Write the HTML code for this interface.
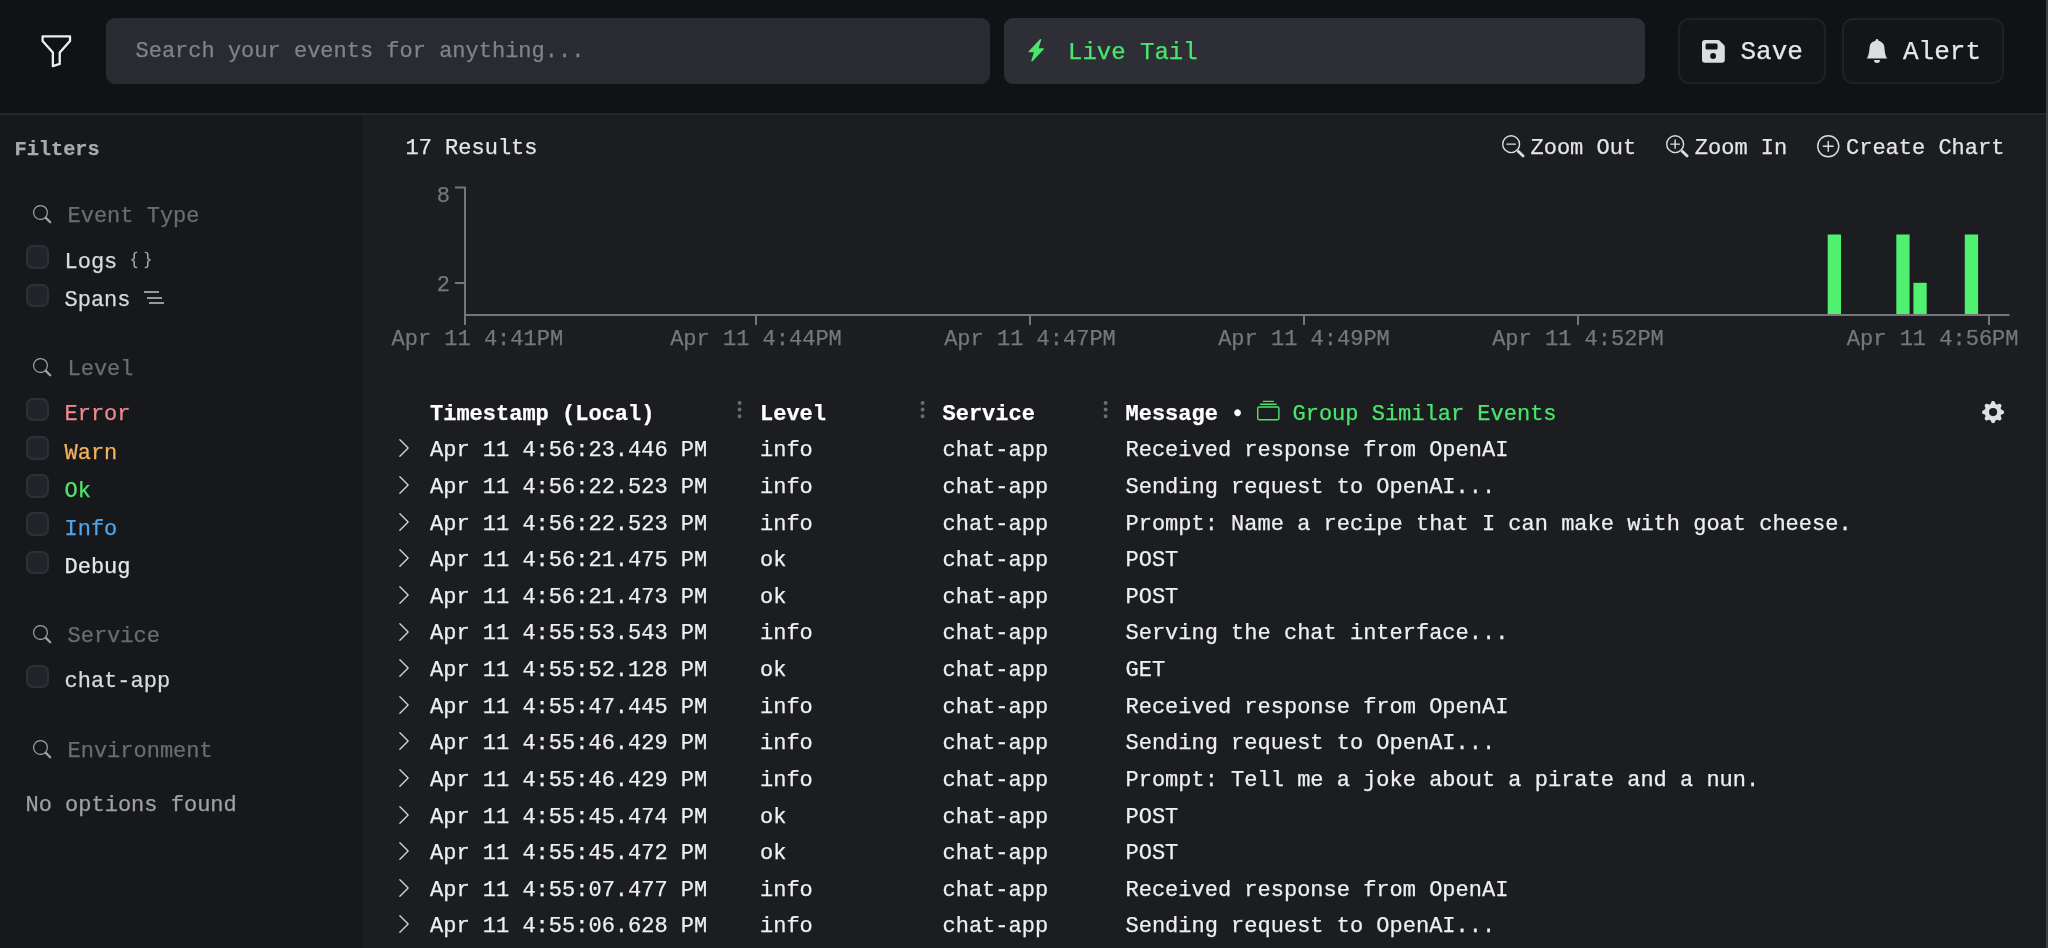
<!DOCTYPE html>
<html lang="en"><head><meta charset="utf-8"><title>Search</title>
<style>
html,body{margin:0;padding:0;background:#1c1d21;}
body{width:2048px;height:948px;position:relative;overflow:hidden;font-family:"Liberation Mono",monospace;}
.t{position:absolute;white-space:pre;-webkit-text-stroke:0.25px currentColor;font-family:"Liberation Mono",monospace;}
.i{position:absolute;display:block;overflow:visible;}
.b{position:absolute;box-sizing:border-box;}
.cb{position:absolute;box-sizing:border-box;width:23.3px;height:23.4px;border-radius:7px;background:#232429;border:2px solid #2f3036;}
#w{position:absolute;left:0;top:0;width:2048px;height:948px;will-change:transform;}
</style></head><body><div id="w">

<div class="b" style="left:0;top:0;width:2048px;height:113px;background:#111216"></div>
<div class="b" style="left:0;top:111px;width:2048px;height:2px;background:#0f1014"></div>
<div class="b" style="left:0;top:113px;width:2048px;height:2px;background:#25262a"></div>
<div class="b" style="left:0;top:115px;width:363px;height:833px;background:#17181c"></div>
<div class="b" style="left:2046px;top:0;width:2px;height:948px;background:#3e3f44"></div>
<svg class="i" style="left:38.40px;top:32.50px" width="36.6" height="36.6" viewBox="0 0 16 16" fill="#eeeff1"><path d="M1.5 1.5A.5.5 0 0 1 2 1h12a.5.5 0 0 1 .5.5v2a.5.5 0 0 1-.128.334L10 8.692V13.5a.5.5 0 0 1-.342.474l-3 1A.5.5 0 0 1 6 14.5V8.692L1.628 3.834A.5.5 0 0 1 1.5 3.5zm1 .5v1.308l4.372 4.858A.5.5 0 0 1 7 8.5v5.306l2-.666V8.5a.5.5 0 0 1 .128-.334L13.5 3.308V2z"/></svg>
<div class="b" style="left:106px;top:18px;width:883.5px;height:66px;border-radius:9px;background:#2a2b30"></div>
<div class="t " style="left:135.5px;top:41.05px;font-size:22px;line-height:22px;color:#7f838a;">Search your events for anything...</div>
<div class="b" style="left:1004px;top:18px;width:640.5px;height:66px;border-radius:9px;background:#2e2f36"></div>
<svg class="i" style="left:1025.00px;top:39.00px" width="22.5" height="22.5" viewBox="0 0 16 16" fill="#4be56d"><path d="M11.251.068a.5.5 0 0 1 .227.58L9.677 6.5H13a.5.5 0 0 1 .364.843l-8 8.5a.5.5 0 0 1-.842-.49L6.323 9.5H3a.5.5 0 0 1-.364-.843l8-8.5a.5.5 0 0 1 .615-.09z"/></svg>
<div class="t " style="left:1068.0px;top:41.31px;font-size:24px;line-height:24px;color:#4be56d;">Live Tail</div>
<div class="b" style="left:1678px;top:18px;width:148px;height:66px;border-radius:11px;background:#141518;border:2px solid #202126"></div>
<svg class="i" style="left:1702.40px;top:39.70px" width="22.8" height="22.8" viewBox="0 0 23 23" fill="#dcdde0"><path fill-rule="evenodd" d="M3 0H16.2a2 2 0 0 1 1.4.6L22.4 5.4a2 2 0 0 1 .6 1.4V20a3 3 0 0 1-3 3H3a3 3 0 0 1-3-3V3a3 3 0 0 1 3-3ZM5 3.6H14.3a1.4 1.4 0 0 1 1.4 1.4V8.3a1.4 1.4 0 0 1-1.4 1.4H5A1.4 1.4 0 0 1 3.600 8.3V5A1.4 1.4 0 0 1 5 3.6ZM11.200 13.2a3 3 0 1 0 0 6a3 3 0 1 0 0-6Z"/></svg>
<div class="t " style="left:1740.5px;top:39.48px;font-size:26px;line-height:26px;color:#e6e7ea;">Save</div>
<div class="b" style="left:1841.5px;top:18px;width:162px;height:66px;border-radius:11px;background:#141518;border:2px solid #202126"></div>
<svg class="i" style="left:1865.00px;top:39.00px" width="24" height="24" viewBox="0 0 16 16" fill="#dcdde0"><path d="M8 16a2 2 0 0 0 2-2H6a2 2 0 0 0 2 2m.995-14.901a1 1 0 1 0-1.99 0A5 5 0 0 0 3 6c0 1.098-.5 6-2 7h14c-1.5-1-2-5.902-2-7 0-2.42-1.72-4.44-4.005-4.901"/></svg>
<div class="t " style="left:1903.0px;top:39.48px;font-size:26px;line-height:26px;color:#e6e7ea;">Alert</div>
<div class="t " style="left:14.5px;top:140.25px;font-size:20.3px;line-height:20.3px;color:#a9aaaf;font-weight:700;">Filters</div>
<svg class="i" style="left:32.80px;top:204.90px" width="18.4" height="18.4" viewBox="0 0 16 16" fill="#a0a1a6"><path d="M11.742 10.344a6.5 6.5 0 1 0-1.397 1.398h-.001q.044.06.098.115l3.85 3.85a1 1 0 0 0 1.415-1.414l-3.85-3.85a1 1 0 0 0-.115-.1zM12 6.5a5.5 5.5 0 1 1-11 0 5.5 5.5 0 0 1 11 0"/></svg>
<div class="t " style="left:67.5px;top:206.05px;font-size:22px;line-height:22px;color:#6b6c71;">Event Type</div>
<div class="cb" style="left:25.9px;top:245.2px"></div>
<div class="t " style="left:64.5px;top:251.55px;font-size:22px;line-height:22px;color:#d9dade;">Logs</div>
<svg class="i" style="left:129.60px;top:248.60px" width="22" height="22" viewBox="0 0 16 16" fill="#a3a4a9"><path d="M2.114 8.063V7.9c1.005-.102 1.497-.615 1.497-1.6V4.503c0-1.094.39-1.538 1.354-1.538h.273V2h-.376C3.25 2 2.49 2.759 2.49 4.352v1.524c0 1.094-.376 1.456-1.49 1.456v1.299c1.114 0 1.49.362 1.49 1.456v1.524c0 1.593.759 2.352 2.372 2.352h.376v-.964h-.273c-.964 0-1.354-.444-1.354-1.538V9.663c0-.984-.492-1.497-1.497-1.6M13.886 7.9v.163c-1.005.103-1.497.616-1.497 1.6v1.798c0 1.094-.39 1.538-1.354 1.538h-.273v.964h.376c1.613 0 2.372-.759 2.372-2.352v-1.524c0-1.094.376-1.456 1.49-1.456V7.332c-1.114 0-1.49-.362-1.49-1.456V4.352C13.51 2.759 12.75 2 11.138 2h-.376v.964h.273c.964 0 1.354.444 1.354 1.538V6.3c0 .984.492 1.497 1.497 1.6"/></svg>
<div class="cb" style="left:25.9px;top:283.5px"></div>
<div class="t " style="left:64.5px;top:289.85px;font-size:22px;line-height:22px;color:#d9dade;">Spans</div>
<div class="b" style="left:143.9px;top:291.1px;width:15.2px;height:1.9px;background:#96979c"></div>
<div class="b" style="left:146.6px;top:296.8px;width:15.2px;height:1.9px;background:#96979c"></div>
<div class="b" style="left:149.2px;top:302.2px;width:15.2px;height:1.9px;background:#96979c"></div>
<svg class="i" style="left:32.80px;top:357.90px" width="18.4" height="18.4" viewBox="0 0 16 16" fill="#a0a1a6"><path d="M11.742 10.344a6.5 6.5 0 1 0-1.397 1.398h-.001q.044.06.098.115l3.85 3.85a1 1 0 0 0 1.415-1.414l-3.85-3.85a1 1 0 0 0-.115-.1zM12 6.5a5.5 5.5 0 1 1-11 0 5.5 5.5 0 0 1 11 0"/></svg>
<div class="t " style="left:67.5px;top:359.05px;font-size:22px;line-height:22px;color:#6b6c71;">Level</div>
<div class="cb" style="left:25.9px;top:397.8px"></div>
<div class="t " style="left:64.5px;top:404.15px;font-size:22px;line-height:22px;color:#f08a8c;">Error</div>
<div class="cb" style="left:25.9px;top:436.3px"></div>
<div class="t " style="left:64.5px;top:442.65px;font-size:22px;line-height:22px;color:#f5b35c;">Warn</div>
<div class="cb" style="left:25.9px;top:474.3px"></div>
<div class="t " style="left:64.5px;top:480.65px;font-size:22px;line-height:22px;color:#4fe56c;">Ok</div>
<div class="cb" style="left:25.9px;top:512.3px"></div>
<div class="t " style="left:64.5px;top:518.65px;font-size:22px;line-height:22px;color:#4aa6ee;">Info</div>
<div class="cb" style="left:25.9px;top:550.7px"></div>
<div class="t " style="left:64.5px;top:557.05px;font-size:22px;line-height:22px;color:#e6e7ea;">Debug</div>
<svg class="i" style="left:32.80px;top:624.90px" width="18.4" height="18.4" viewBox="0 0 16 16" fill="#a0a1a6"><path d="M11.742 10.344a6.5 6.5 0 1 0-1.397 1.398h-.001q.044.06.098.115l3.85 3.85a1 1 0 0 0 1.415-1.414l-3.85-3.85a1 1 0 0 0-.115-.1zM12 6.5a5.5 5.5 0 1 1-11 0 5.5 5.5 0 0 1 11 0"/></svg>
<div class="t " style="left:67.5px;top:626.05px;font-size:22px;line-height:22px;color:#6b6c71;">Service</div>
<div class="cb" style="left:25.9px;top:665.1px"></div>
<div class="t " style="left:64.5px;top:671.45px;font-size:22px;line-height:22px;color:#d9dade;">chat-app</div>
<svg class="i" style="left:32.80px;top:740.30px" width="18.4" height="18.4" viewBox="0 0 16 16" fill="#a0a1a6"><path d="M11.742 10.344a6.5 6.5 0 1 0-1.397 1.398h-.001q.044.06.098.115l3.85 3.85a1 1 0 0 0 1.415-1.414l-3.85-3.85a1 1 0 0 0-.115-.1zM12 6.5a5.5 5.5 0 1 1-11 0 5.5 5.5 0 0 1 11 0"/></svg>
<div class="t " style="left:67.5px;top:741.45px;font-size:22px;line-height:22px;color:#6b6c71;">Environment</div>
<div class="t " style="left:25.5px;top:795.25px;font-size:22px;line-height:22px;color:#a0a1a6;">No options found</div>
<div class="t " style="left:405.5px;top:138.25px;font-size:22px;line-height:22px;color:#e4e5e9;">17 Results</div>
<svg class="i" style="left:1501.50px;top:135.00px" width="22.5" height="22.5" viewBox="0 0 16 16" fill="#dcdde0"><path fill-rule="evenodd" d="M6.5 12a5.5 5.5 0 1 0 0-11 5.5 5.5 0 0 0 0 11M13 6.5a6.5 6.5 0 1 1-13 0 6.5 6.5 0 0 1 13 0"/><path d="M10.344 11.742q.044.06.098.115l3.85 3.85a1 1 0 0 0 1.415-1.414l-3.85-3.85a1 1 0 0 0-.115-.1 6.5 6.5 0 0 1-1.398 1.4z"/><path fill-rule="evenodd" d="M3 6.5a.5.5 0 0 1 .5-.5h6a.5.5 0 0 1 0 1h-6a.5.5 0 0 1-.5-.5"/></svg>
<div class="t " style="left:1530.5px;top:138.25px;font-size:22px;line-height:22px;color:#e4e5e9;">Zoom Out</div>
<svg class="i" style="left:1665.50px;top:135.00px" width="22.5" height="22.5" viewBox="0 0 16 16" fill="#dcdde0"><path fill-rule="evenodd" d="M6.5 12a5.5 5.5 0 1 0 0-11 5.5 5.5 0 0 0 0 11M13 6.5a6.5 6.5 0 1 1-13 0 6.5 6.5 0 0 1 13 0"/><path d="M10.344 11.742q.044.06.098.115l3.85 3.85a1 1 0 0 0 1.415-1.414l-3.85-3.85a1 1 0 0 0-.115-.1 6.5 6.5 0 0 1-1.398 1.4z"/><path fill-rule="evenodd" d="M6.5 3a.5.5 0 0 1 .5.5V6h2.5a.5.5 0 0 1 0 1H7v2.5a.5.5 0 0 1-1 0V7H3.5a.5.5 0 0 1 0-1H6V3.5a.5.5 0 0 1 .5-.5"/></svg>
<div class="t " style="left:1694.8px;top:138.25px;font-size:22px;line-height:22px;color:#e4e5e9;">Zoom In</div>
<svg class="i" style="left:1816.60px;top:135.00px" width="22.5" height="22.5" viewBox="0 0 16 16" fill="#dcdde0"><path d="M8 15A7 7 0 1 1 8 1a7 7 0 0 1 0 14m0 1A8 8 0 1 0 8 0a8 8 0 0 0 0 16"/><path d="M8 4a.5.5 0 0 1 .5.5v3h3a.5.5 0 0 1 0 1h-3v3a.5.5 0 0 1-1 0v-3h-3a.5.5 0 0 1 0-1h3v-3A.5.5 0 0 1 8 4"/></svg>
<div class="t " style="left:1846.0px;top:138.25px;font-size:22px;line-height:22px;color:#e4e5e9;">Create Chart</div>
<svg class="i" style="left:0;top:0" width="2048" height="948" viewBox="0 0 2048 948"><path d="M455 187.5H465V325 M465 315H2009.5 M455 283H465 M756 315V325 M1030 315V325 M1304 315V325 M1578 315V325 M1989 315V325" fill="none" stroke="#75767b" stroke-width="2"/><rect x="1827.7" y="234.5" width="13.3" height="79.5" fill="#50f070"/><rect x="1896.3" y="234.5" width="13.3" height="79.5" fill="#50f070"/><rect x="1913.4" y="282.8" width="13.3" height="31.19999999999999" fill="#50f070"/><rect x="1964.8" y="234.5" width="13.3" height="79.5" fill="#50f070"/><text x="450" y="202.2" text-anchor="end" font-family='"Liberation Mono", monospace' font-size="22" fill="#76777c" stroke="#76777c" stroke-width="0.25">8</text><text x="450" y="291" text-anchor="end" font-family='"Liberation Mono", monospace' font-size="22" fill="#76777c" stroke="#76777c" stroke-width="0.25">2</text><text x="391.5" y="345" text-anchor="start" font-family='"Liberation Mono", monospace' font-size="22" fill="#76777c" stroke="#76777c" stroke-width="0.25">Apr 11 4:41PM</text><text x="756" y="345" text-anchor="middle" font-family='"Liberation Mono", monospace' font-size="22" fill="#76777c" stroke="#76777c" stroke-width="0.25">Apr 11 4:44PM</text><text x="1030" y="345" text-anchor="middle" font-family='"Liberation Mono", monospace' font-size="22" fill="#76777c" stroke="#76777c" stroke-width="0.25">Apr 11 4:47PM</text><text x="1304" y="345" text-anchor="middle" font-family='"Liberation Mono", monospace' font-size="22" fill="#76777c" stroke="#76777c" stroke-width="0.25">Apr 11 4:49PM</text><text x="1578" y="345" text-anchor="middle" font-family='"Liberation Mono", monospace' font-size="22" fill="#76777c" stroke="#76777c" stroke-width="0.25">Apr 11 4:52PM</text><text x="2018.5" y="345" text-anchor="end" font-family='"Liberation Mono", monospace' font-size="22" fill="#76777c" stroke="#76777c" stroke-width="0.25">Apr 11 4:56PM</text></svg>
<div class="t " style="left:430.0px;top:403.65px;font-size:22px;line-height:22px;color:#ffffff;font-weight:700;">Timestamp (Local)</div>
<div class="t " style="left:760.0px;top:403.65px;font-size:22px;line-height:22px;color:#ffffff;font-weight:700;">Level</div>
<div class="t " style="left:942.5px;top:403.65px;font-size:22px;line-height:22px;color:#ffffff;font-weight:700;">Service</div>
<div class="t " style="left:1125.5px;top:403.65px;font-size:22px;line-height:22px;color:#ffffff;font-weight:700;">Message</div>
<div class="t " style="left:1231.1px;top:403.65px;font-size:22px;line-height:22px;color:#ffffff;font-weight:700;">•</div>
<svg class="i" style="left:1256.80px;top:400.00px" width="22.6" height="22.6" viewBox="0 0 16 16" fill="#4be56d"><path d="M2.5 3.5a.5.5 0 0 1 0-1h11a.5.5 0 0 1 0 1zm2-2a.5.5 0 0 1 0-1h7a.5.5 0 0 1 0 1zM0 13a1.5 1.5 0 0 0 1.5 1.5h13A1.5 1.5 0 0 0 16 13V6a1.5 1.5 0 0 0-1.5-1.5h-13A1.5 1.5 0 0 0 0 6zm1.5.5A.5.5 0 0 1 1 13V6a.5.5 0 0 1 .5-.5h13a.5.5 0 0 1 .5.5v7a.5.5 0 0 1-.5.5z"/></svg>
<div class="t " style="left:1292.5px;top:403.65px;font-size:22px;line-height:22px;color:#4be56d;">Group Similar Events</div>
<svg class="i" style="left:728.90px;top:398.80px" width="21.2" height="21.2" viewBox="0 0 16 16" fill="#6b6c72"><path d="M9.5 13a1.5 1.5 0 1 1-3 0 1.5 1.5 0 0 1 3 0m0-5a1.5 1.5 0 1 1-3 0 1.5 1.5 0 0 1 3 0m0-5a1.5 1.5 0 1 1-3 0 1.5 1.5 0 0 1 3 0"/></svg>
<svg class="i" style="left:911.80px;top:398.80px" width="21.2" height="21.2" viewBox="0 0 16 16" fill="#6b6c72"><path d="M9.5 13a1.5 1.5 0 1 1-3 0 1.5 1.5 0 0 1 3 0m0-5a1.5 1.5 0 1 1-3 0 1.5 1.5 0 0 1 3 0m0-5a1.5 1.5 0 1 1-3 0 1.5 1.5 0 0 1 3 0"/></svg>
<svg class="i" style="left:1094.80px;top:398.80px" width="21.2" height="21.2" viewBox="0 0 16 16" fill="#6b6c72"><path d="M9.5 13a1.5 1.5 0 1 1-3 0 1.5 1.5 0 0 1 3 0m0-5a1.5 1.5 0 1 1-3 0 1.5 1.5 0 0 1 3 0m0-5a1.5 1.5 0 1 1-3 0 1.5 1.5 0 0 1 3 0"/></svg>
<svg class="i" style="left:1981.90px;top:400.80px" width="22.2" height="22.2" viewBox="0 0 16 16" fill="#dfe0e3"><path d="M9.405 1.05c-.413-1.4-2.397-1.4-2.81 0l-.1.34a1.464 1.464 0 0 1-2.105.872l-.31-.17c-1.283-.698-2.686.705-1.987 1.987l.169.311c.446.82.023 1.841-.872 2.105l-.34.1c-1.4.413-1.4 2.397 0 2.81l.34.1a1.464 1.464 0 0 1 .872 2.105l-.17.31c-.698 1.283.705 2.686 1.987 1.987l.311-.169a1.464 1.464 0 0 1 2.105.872l.1.34c.413 1.4 2.397 1.4 2.81 0l.1-.34a1.464 1.464 0 0 1 2.105-.872l.31.17c1.283.698 2.686-.705 1.987-1.987l-.169-.311a1.464 1.464 0 0 1 .872-2.105l.34-.1c1.4-.413 1.4-2.397 0-2.81l-.34-.1a1.464 1.464 0 0 1-.872-2.105l.17-.31c.698-1.283-.705-2.686-1.987-1.987l-.311.169a1.464 1.464 0 0 1-2.105-.872zM8 10.93a2.929 2.929 0 1 1 0-5.86 2.929 2.929 0 0 1 0 5.858z"/></svg>
<svg class="i" style="left:393.40px;top:437.40px" width="22" height="22" viewBox="0 0 16 16" fill="#d0d1d5"><path fill-rule="evenodd" d="M4.646 1.646a.5.5 0 0 1 .708 0l6 6a.5.5 0 0 1 0 .708l-6 6a.5.5 0 0 1-.708-.708L10.293 8 4.646 2.354a.5.5 0 0 1 0-.708"/></svg>
<div class="t " style="left:430.0px;top:440.35px;font-size:22px;line-height:22px;color:#eeeff2;">Apr 11 4:56:23.446 PM</div>
<div class="t " style="left:760.0px;top:440.35px;font-size:22px;line-height:22px;color:#eeeff2;">info</div>
<div class="t " style="left:942.5px;top:440.35px;font-size:22px;line-height:22px;color:#eeeff2;">chat-app</div>
<div class="t " style="left:1125.5px;top:440.35px;font-size:22px;line-height:22px;color:#eeeff2;">Received response from OpenAI</div>
<svg class="i" style="left:393.40px;top:474.02px" width="22" height="22" viewBox="0 0 16 16" fill="#d0d1d5"><path fill-rule="evenodd" d="M4.646 1.646a.5.5 0 0 1 .708 0l6 6a.5.5 0 0 1 0 .708l-6 6a.5.5 0 0 1-.708-.708L10.293 8 4.646 2.354a.5.5 0 0 1 0-.708"/></svg>
<div class="t " style="left:430.0px;top:476.97px;font-size:22px;line-height:22px;color:#eeeff2;">Apr 11 4:56:22.523 PM</div>
<div class="t " style="left:760.0px;top:476.97px;font-size:22px;line-height:22px;color:#eeeff2;">info</div>
<div class="t " style="left:942.5px;top:476.97px;font-size:22px;line-height:22px;color:#eeeff2;">chat-app</div>
<div class="t " style="left:1125.5px;top:476.97px;font-size:22px;line-height:22px;color:#eeeff2;">Sending request to OpenAI...</div>
<svg class="i" style="left:393.40px;top:510.64px" width="22" height="22" viewBox="0 0 16 16" fill="#d0d1d5"><path fill-rule="evenodd" d="M4.646 1.646a.5.5 0 0 1 .708 0l6 6a.5.5 0 0 1 0 .708l-6 6a.5.5 0 0 1-.708-.708L10.293 8 4.646 2.354a.5.5 0 0 1 0-.708"/></svg>
<div class="t " style="left:430.0px;top:513.59px;font-size:22px;line-height:22px;color:#eeeff2;">Apr 11 4:56:22.523 PM</div>
<div class="t " style="left:760.0px;top:513.59px;font-size:22px;line-height:22px;color:#eeeff2;">info</div>
<div class="t " style="left:942.5px;top:513.59px;font-size:22px;line-height:22px;color:#eeeff2;">chat-app</div>
<div class="t " style="left:1125.5px;top:513.59px;font-size:22px;line-height:22px;color:#eeeff2;">Prompt: Name a recipe that I can make with goat cheese.</div>
<svg class="i" style="left:393.40px;top:547.26px" width="22" height="22" viewBox="0 0 16 16" fill="#d0d1d5"><path fill-rule="evenodd" d="M4.646 1.646a.5.5 0 0 1 .708 0l6 6a.5.5 0 0 1 0 .708l-6 6a.5.5 0 0 1-.708-.708L10.293 8 4.646 2.354a.5.5 0 0 1 0-.708"/></svg>
<div class="t " style="left:430.0px;top:550.21px;font-size:22px;line-height:22px;color:#eeeff2;">Apr 11 4:56:21.475 PM</div>
<div class="t " style="left:760.0px;top:550.21px;font-size:22px;line-height:22px;color:#eeeff2;">ok</div>
<div class="t " style="left:942.5px;top:550.21px;font-size:22px;line-height:22px;color:#eeeff2;">chat-app</div>
<div class="t " style="left:1125.5px;top:550.21px;font-size:22px;line-height:22px;color:#eeeff2;">POST</div>
<svg class="i" style="left:393.40px;top:583.88px" width="22" height="22" viewBox="0 0 16 16" fill="#d0d1d5"><path fill-rule="evenodd" d="M4.646 1.646a.5.5 0 0 1 .708 0l6 6a.5.5 0 0 1 0 .708l-6 6a.5.5 0 0 1-.708-.708L10.293 8 4.646 2.354a.5.5 0 0 1 0-.708"/></svg>
<div class="t " style="left:430.0px;top:586.83px;font-size:22px;line-height:22px;color:#eeeff2;">Apr 11 4:56:21.473 PM</div>
<div class="t " style="left:760.0px;top:586.83px;font-size:22px;line-height:22px;color:#eeeff2;">ok</div>
<div class="t " style="left:942.5px;top:586.83px;font-size:22px;line-height:22px;color:#eeeff2;">chat-app</div>
<div class="t " style="left:1125.5px;top:586.83px;font-size:22px;line-height:22px;color:#eeeff2;">POST</div>
<svg class="i" style="left:393.40px;top:620.50px" width="22" height="22" viewBox="0 0 16 16" fill="#d0d1d5"><path fill-rule="evenodd" d="M4.646 1.646a.5.5 0 0 1 .708 0l6 6a.5.5 0 0 1 0 .708l-6 6a.5.5 0 0 1-.708-.708L10.293 8 4.646 2.354a.5.5 0 0 1 0-.708"/></svg>
<div class="t " style="left:430.0px;top:623.45px;font-size:22px;line-height:22px;color:#eeeff2;">Apr 11 4:55:53.543 PM</div>
<div class="t " style="left:760.0px;top:623.45px;font-size:22px;line-height:22px;color:#eeeff2;">info</div>
<div class="t " style="left:942.5px;top:623.45px;font-size:22px;line-height:22px;color:#eeeff2;">chat-app</div>
<div class="t " style="left:1125.5px;top:623.45px;font-size:22px;line-height:22px;color:#eeeff2;">Serving the chat interface...</div>
<svg class="i" style="left:393.40px;top:657.12px" width="22" height="22" viewBox="0 0 16 16" fill="#d0d1d5"><path fill-rule="evenodd" d="M4.646 1.646a.5.5 0 0 1 .708 0l6 6a.5.5 0 0 1 0 .708l-6 6a.5.5 0 0 1-.708-.708L10.293 8 4.646 2.354a.5.5 0 0 1 0-.708"/></svg>
<div class="t " style="left:430.0px;top:660.07px;font-size:22px;line-height:22px;color:#eeeff2;">Apr 11 4:55:52.128 PM</div>
<div class="t " style="left:760.0px;top:660.07px;font-size:22px;line-height:22px;color:#eeeff2;">ok</div>
<div class="t " style="left:942.5px;top:660.07px;font-size:22px;line-height:22px;color:#eeeff2;">chat-app</div>
<div class="t " style="left:1125.5px;top:660.07px;font-size:22px;line-height:22px;color:#eeeff2;">GET</div>
<svg class="i" style="left:393.40px;top:693.74px" width="22" height="22" viewBox="0 0 16 16" fill="#d0d1d5"><path fill-rule="evenodd" d="M4.646 1.646a.5.5 0 0 1 .708 0l6 6a.5.5 0 0 1 0 .708l-6 6a.5.5 0 0 1-.708-.708L10.293 8 4.646 2.354a.5.5 0 0 1 0-.708"/></svg>
<div class="t " style="left:430.0px;top:696.69px;font-size:22px;line-height:22px;color:#eeeff2;">Apr 11 4:55:47.445 PM</div>
<div class="t " style="left:760.0px;top:696.69px;font-size:22px;line-height:22px;color:#eeeff2;">info</div>
<div class="t " style="left:942.5px;top:696.69px;font-size:22px;line-height:22px;color:#eeeff2;">chat-app</div>
<div class="t " style="left:1125.5px;top:696.69px;font-size:22px;line-height:22px;color:#eeeff2;">Received response from OpenAI</div>
<svg class="i" style="left:393.40px;top:730.36px" width="22" height="22" viewBox="0 0 16 16" fill="#d0d1d5"><path fill-rule="evenodd" d="M4.646 1.646a.5.5 0 0 1 .708 0l6 6a.5.5 0 0 1 0 .708l-6 6a.5.5 0 0 1-.708-.708L10.293 8 4.646 2.354a.5.5 0 0 1 0-.708"/></svg>
<div class="t " style="left:430.0px;top:733.31px;font-size:22px;line-height:22px;color:#eeeff2;">Apr 11 4:55:46.429 PM</div>
<div class="t " style="left:760.0px;top:733.31px;font-size:22px;line-height:22px;color:#eeeff2;">info</div>
<div class="t " style="left:942.5px;top:733.31px;font-size:22px;line-height:22px;color:#eeeff2;">chat-app</div>
<div class="t " style="left:1125.5px;top:733.31px;font-size:22px;line-height:22px;color:#eeeff2;">Sending request to OpenAI...</div>
<svg class="i" style="left:393.40px;top:766.98px" width="22" height="22" viewBox="0 0 16 16" fill="#d0d1d5"><path fill-rule="evenodd" d="M4.646 1.646a.5.5 0 0 1 .708 0l6 6a.5.5 0 0 1 0 .708l-6 6a.5.5 0 0 1-.708-.708L10.293 8 4.646 2.354a.5.5 0 0 1 0-.708"/></svg>
<div class="t " style="left:430.0px;top:769.93px;font-size:22px;line-height:22px;color:#eeeff2;">Apr 11 4:55:46.429 PM</div>
<div class="t " style="left:760.0px;top:769.93px;font-size:22px;line-height:22px;color:#eeeff2;">info</div>
<div class="t " style="left:942.5px;top:769.93px;font-size:22px;line-height:22px;color:#eeeff2;">chat-app</div>
<div class="t " style="left:1125.5px;top:769.93px;font-size:22px;line-height:22px;color:#eeeff2;">Prompt: Tell me a joke about a pirate and a nun.</div>
<svg class="i" style="left:393.40px;top:803.60px" width="22" height="22" viewBox="0 0 16 16" fill="#d0d1d5"><path fill-rule="evenodd" d="M4.646 1.646a.5.5 0 0 1 .708 0l6 6a.5.5 0 0 1 0 .708l-6 6a.5.5 0 0 1-.708-.708L10.293 8 4.646 2.354a.5.5 0 0 1 0-.708"/></svg>
<div class="t " style="left:430.0px;top:806.55px;font-size:22px;line-height:22px;color:#eeeff2;">Apr 11 4:55:45.474 PM</div>
<div class="t " style="left:760.0px;top:806.55px;font-size:22px;line-height:22px;color:#eeeff2;">ok</div>
<div class="t " style="left:942.5px;top:806.55px;font-size:22px;line-height:22px;color:#eeeff2;">chat-app</div>
<div class="t " style="left:1125.5px;top:806.55px;font-size:22px;line-height:22px;color:#eeeff2;">POST</div>
<svg class="i" style="left:393.40px;top:840.22px" width="22" height="22" viewBox="0 0 16 16" fill="#d0d1d5"><path fill-rule="evenodd" d="M4.646 1.646a.5.5 0 0 1 .708 0l6 6a.5.5 0 0 1 0 .708l-6 6a.5.5 0 0 1-.708-.708L10.293 8 4.646 2.354a.5.5 0 0 1 0-.708"/></svg>
<div class="t " style="left:430.0px;top:843.17px;font-size:22px;line-height:22px;color:#eeeff2;">Apr 11 4:55:45.472 PM</div>
<div class="t " style="left:760.0px;top:843.17px;font-size:22px;line-height:22px;color:#eeeff2;">ok</div>
<div class="t " style="left:942.5px;top:843.17px;font-size:22px;line-height:22px;color:#eeeff2;">chat-app</div>
<div class="t " style="left:1125.5px;top:843.17px;font-size:22px;line-height:22px;color:#eeeff2;">POST</div>
<svg class="i" style="left:393.40px;top:876.84px" width="22" height="22" viewBox="0 0 16 16" fill="#d0d1d5"><path fill-rule="evenodd" d="M4.646 1.646a.5.5 0 0 1 .708 0l6 6a.5.5 0 0 1 0 .708l-6 6a.5.5 0 0 1-.708-.708L10.293 8 4.646 2.354a.5.5 0 0 1 0-.708"/></svg>
<div class="t " style="left:430.0px;top:879.79px;font-size:22px;line-height:22px;color:#eeeff2;">Apr 11 4:55:07.477 PM</div>
<div class="t " style="left:760.0px;top:879.79px;font-size:22px;line-height:22px;color:#eeeff2;">info</div>
<div class="t " style="left:942.5px;top:879.79px;font-size:22px;line-height:22px;color:#eeeff2;">chat-app</div>
<div class="t " style="left:1125.5px;top:879.79px;font-size:22px;line-height:22px;color:#eeeff2;">Received response from OpenAI</div>
<svg class="i" style="left:393.40px;top:913.46px" width="22" height="22" viewBox="0 0 16 16" fill="#d0d1d5"><path fill-rule="evenodd" d="M4.646 1.646a.5.5 0 0 1 .708 0l6 6a.5.5 0 0 1 0 .708l-6 6a.5.5 0 0 1-.708-.708L10.293 8 4.646 2.354a.5.5 0 0 1 0-.708"/></svg>
<div class="t " style="left:430.0px;top:916.41px;font-size:22px;line-height:22px;color:#eeeff2;">Apr 11 4:55:06.628 PM</div>
<div class="t " style="left:760.0px;top:916.41px;font-size:22px;line-height:22px;color:#eeeff2;">info</div>
<div class="t " style="left:942.5px;top:916.41px;font-size:22px;line-height:22px;color:#eeeff2;">chat-app</div>
<div class="t " style="left:1125.5px;top:916.41px;font-size:22px;line-height:22px;color:#eeeff2;">Sending request to OpenAI...</div>
</div></body></html>
